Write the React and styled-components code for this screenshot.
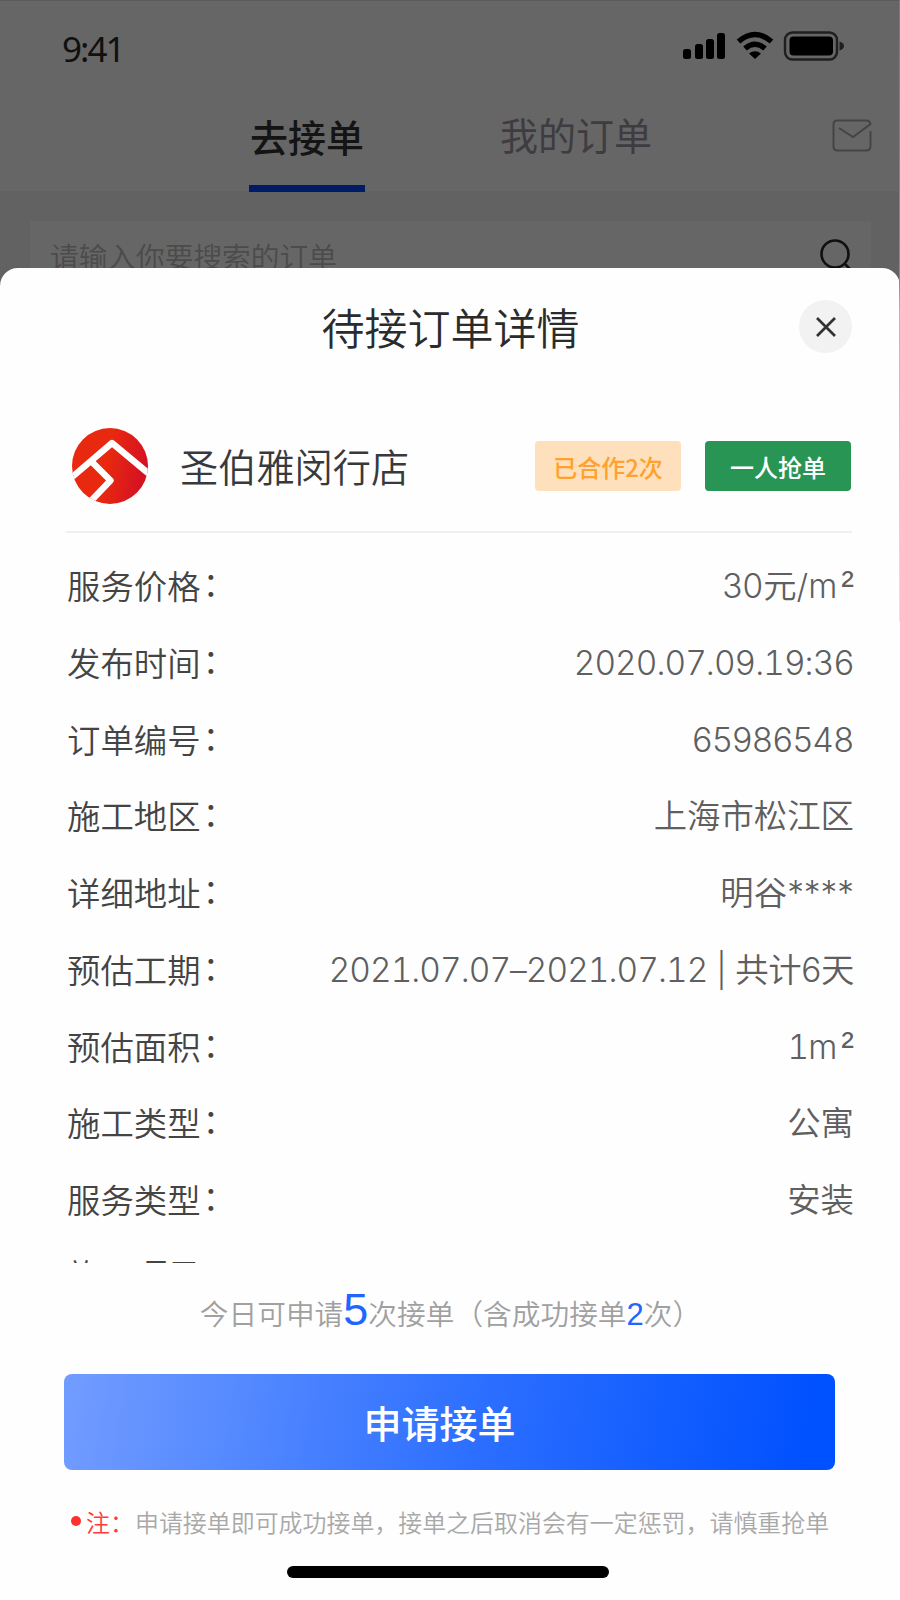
import React from "react";
import styled, { createGlobalStyle } from "styled-components";

const GlobalStyle = createGlobalStyle`
  * {
    box-sizing: border-box;
  }
  body {
    margin: 0;
    background: #fff;
    font-family: "Noto Sans CJK SC", sans-serif;
    font-weight: 350;
  }
`;

const Screen = styled.div`
  display: flex;
  flex-direction: column;
  position: relative;
  width: 900px;
  height: 1600px;
  overflow: hidden;
  background: linear-gradient(#626262 400px, #fefefe 400px);
`;

const Edge = styled.div`
  position: absolute;
  z-index: 1;
  top: 0;
  right: 0;
  width: 1px;
  height: 622px;
  background: linear-gradient(#b3606d, #c2707e 45%, #dfa5ad 50%, #f3dfe2);
`;

const Page = styled.div`
  flex: none;
  height: 268px;
  overflow: hidden;
`;

const TopArea = styled.div`
  height: 191px;
  background: #666;
  border-top: 1px solid #5a5a5a;
`;

const StatusBar = styled.div`
  display: flex;
  align-items: center;
  justify-content: space-between;
  height: 96px;
  padding: 0 55px 4px 62px;
`;

const Time = styled.span`
  padding-top: 2px;
  font-family: "Noto Sans", sans-serif;
  font-weight: 400;
  font-size: 35px;
  letter-spacing: -2px;
  color: #101010;
`;

const Tabs = styled.div`
  display: flex;
  height: 94px;
  padding: 0 28px 0 249px;
`;

const Tab = styled.div`
  width: ${(props) => (props.$active ? "116px" : "154px")};
  height: 95px;
  margin-right: ${(props) => (props.$active ? "134px" : "auto")};
  border-bottom: ${(props) => (props.$active ? "7px solid #001c66" : "none")};
  font-size: 38px;
  line-height: ${(props) => (props.$active ? "78px" : "73px")};
  font-weight: ${(props) => (props.$active ? 500 : 400)};
  text-align: center;
  white-space: nowrap;
  color: ${(props) => (props.$active ? "#141414" : "#3e3c40")};
`;

const MailIcon = styled.svg`
  margin-top: 22px;
`;

const SearchBox = styled.div`
  display: flex;
  justify-content: space-between;
  width: 841px;
  height: 80px;
  margin: 30px 0 0 30px;
  padding: 0 18px 0 20px;
  background: #666;
  font-size: 28.7px;
  line-height: 69px;
  color: #4b4b4b;
`;

const SearchIcon = styled.svg`
  margin-top: 17px;
`;

const Sheet = styled.div`
  flex: 1;
  display: flex;
  flex-direction: column;
  padding: 0 47px 0 66px;
  border-radius: 18px 18px 0 0;
  background: #fefefe;
`;

const SheetHeader = styled.div`
  display: grid;
  grid-template-columns: 54px 1fr 54px;
  align-items: center;
  height: 117px;
  margin-left: -18px;
`;

const Title = styled.h1`
  grid-column: 2;
  margin: 0;
  padding-bottom: 2px;
  font-size: 43px;
  line-height: 60px;
  font-weight: 350;
  text-align: center;
  color: #2b2b2b;
`;

const Close = styled.button`
  display: flex;
  align-items: center;
  justify-content: center;
  width: 53px;
  height: 53px;
  padding: 0;
  border: 0;
  border-radius: 50%;
  background: #f2f2f2;
`;

const Shop = styled.div`
  display: flex;
  align-items: center;
  width: 786px;
  height: 148px;
  padding: 16px 1px 0 6px;
  border-bottom: 2px solid #f0f0f0;
`;

const ShopName = styled.div`
  flex: 1;
  margin-left: 32px;
  font-size: 38.2px;
  line-height: 50px;
  color: #38393c;
`;

const Badge = styled.div`
  width: 146px;
  height: 50px;
  margin-left: 24px;
  border-radius: 4px;
  background: ${(props) => props.$bg};
  font-size: 24px;
  line-height: 52px;
  font-weight: 500;
  text-align: center;
  color: ${(props) => props.$color};
`;

const Rows = styled.div`
  width: 788px;
  height: 730px;
  padding-top: 15px;
  overflow: hidden;
`;

const Row = styled.div`
  display: flex;
  justify-content: space-between;
  height: 76.75px;
  line-height: 74px;

  &:last-child {
    line-height: 69px;
  }
`;

const Label = styled.span`
  padding-left: 1px;
  font-size: 33.4px;
  color: #444;
`;

const Colon = styled.span`
  display: inline-block;
  transform: translate(2px, -3px);
`;

const Value = styled.span`
  padding-top: 1px;
  font-family: Inter, "Noto Sans CJK SC", sans-serif;
  font-size: 33.4px;
  white-space: pre;
  color: #5f5f5f;
`;

const DateText = styled.span`
  font-feature-settings: "tnum", "calt" 0;
  letter-spacing: -0.93px;
`;

const Total = styled.span`
  letter-spacing: -0.4px;
`;

const Square = styled.span`
  margin-left: 4px;
  font-family: "Liberation Sans", sans-serif;
  font-size: 38px;
  line-height: 1;
`;

const Quota = styled.div`
  display: flex;
  align-items: baseline;
  justify-content: center;
  height: 111px;
  margin-right: 18px;
  font-size: 28.7px;
  line-height: 94px;
  color: #a0a0a0;
`;

const Count = styled.span`
  font-family: "Liberation Sans", sans-serif;
  font-size: ${(props) => props.$size}px;
  font-weight: 400;
  color: #2264ff;
`;

const Submit = styled.button`
  width: 771px;
  height: 96px;
  margin-left: -2px;
  padding: 0 20px 0 0;
  border: 0;
  border-radius: 8px;
  background: linear-gradient(100deg, #709bff 2%, #2e70ff 52%, #0051ff 96%);
  font-family: inherit;
  font-size: 38px;
  line-height: 96px;
  font-weight: 500;
  color: #fff;
`;

const Notice = styled.div`
  display: flex;
  align-items: center;
  height: 94px;
  padding: 8px 0 0 5px;
  font-size: 23.95px;
  white-space: nowrap;
  color: #a8a8a8;
`;

const Dot = styled.span`
  width: 10px;
  height: 10px;
  margin-right: 5px;
  border-radius: 50%;
  background: #ff3030;
`;

const Warn = styled.span`
  width: 49px;
  color: #ff3b3b;
`;

const HomeBar = styled.div`
  width: 322px;
  height: 12px;
  margin: 2px 0 0 221px;
  border-radius: 6px;
  background: #000;
`;

const rows = [
  { label: "服务价格", value: <>30元/m<Square>²</Square></> },
  { label: "发布时间", value: <DateText>2020.07.09.19:36</DateText> },
  { label: "订单编号", value: "65986548" },
  { label: "施工地区", value: "上海市松江区" },
  { label: "详细地址", value: "明谷****" },
  {
    label: "预估工期",
    value: (
      <>
        <DateText>2021.07.07–2021.07.12</DateText>
        <Total> | 共计6天</Total>
      </>
    ),
  },
  { label: "预估面积", value: <><DateText>1</DateText>m<Square>²</Square></> },
  { label: "施工类型", value: "公寓" },
  { label: "服务类型", value: "安装" },
  { label: "施工项目", value: "" },
];

const StatusIcons = () => (
  <svg width="164" height="32" viewBox="0 0 164 32">
    <rect x="2" y="18" width="8" height="10" rx="2.5" />
    <rect x="14" y="13" width="8" height="15" rx="2.5" />
    <rect x="25" y="8" width="8" height="20" rx="2.5" />
    <rect x="36" y="2" width="8" height="26" rx="2.5" />
    <g fill="none" stroke="#000" strokeWidth="5.500">
      <path d="M57.500 10.500 Q74 -3.500 90.500 10.500" />
      <path d="M64 17.500 Q74 9 84 17.500" />
    </g>
    <path d="M68 22.500 Q74 18 80 22.500 L74 28Z" />
    <rect x="104" y="1.500" width="52" height="27" rx="7.500" fill="none" stroke="#1f1f1f" strokeWidth="2.400" />
    <rect x="108.500" y="5.500" width="43.500" height="19" rx="4" />
    <path d="M158.500 10.500 Q163 12 163 15 Q163 18 158.500 19.500Z" fill="#1f1f1f" />
  </svg>
);

const Logo = () => (
  <svg width="76" height="76" viewBox="0 0 76 76">
    <defs>
      <linearGradient id="logo" x1="0" y1="0.4" x2="1" y2="0.6">
        <stop offset="0.45" stopColor="#e8290f" />
        <stop offset="1" stopColor="#d30f24" />
      </linearGradient>
      <clipPath id="disc">
        <circle cx="38" cy="38" r="38" />
      </clipPath>
    </defs>
    <g clipPath="url(#disc)">
      <rect width="76" height="76" fill="url(#logo)" />
      <g fill="none" stroke="#fff" strokeWidth="6.400" strokeLinejoin="round">
        <path d="M-4 52.500 L40 15 L82 50" />
        <path d="M20 34 L38.500 52.500 L17 75" />
      </g>
    </g>
  </svg>
);

const App = () => {
  return (
    <Screen>
      <GlobalStyle />
      <Edge />
      <Page>
        <TopArea>
          <StatusBar>
            <Time>9:41</Time>
            <StatusIcons />
          </StatusBar>
          <Tabs>
            <Tab $active>去接单</Tab>
            <Tab>我的订单</Tab>
            <MailIcon width="40" height="34" viewBox="0 0 40 34" fill="none" stroke="#444" strokeWidth="2">
              <path d="M38.500 12 V27 Q38.500 31.500 34 31.500 H5.500 Q1.500 31.500 1.500 27.500 V5.500 Q1.500 1.500 5.500 1.500 H34 Q38 1.500 38.500 5 L21 18 L7 9" />
            </MailIcon>
          </Tabs>
        </TopArea>
        <SearchBox>
          请输入你要搜索的订单
          <SearchIcon width="34" height="36" viewBox="0 0 34 36" fill="none" stroke="#101010" strokeWidth="2.600">
            <circle cx="16" cy="16" r="13.500" />
            <path d="M25 25 L32 32" />
          </SearchIcon>
        </SearchBox>
      </Page>
      <Sheet>
        <SheetHeader>
          <Title>待接订单详情</Title>
          <Close>
            <svg width="22" height="22" viewBox="0 0 22 22" stroke="#333" strokeWidth="2.700">
              <path d="M2 2 L20 20 M20 2 L2 20" />
            </svg>
          </Close>
        </SheetHeader>
        <Shop>
          <Logo />
          <ShopName>圣伯雅闵行店</ShopName>
          <Badge $bg="#ffe0bc" $color="#ffa12e">已合作2次</Badge>
          <Badge $bg="#289555" $color="#fff">一人抢单</Badge>
        </Shop>
        <Rows>
          {rows.map(({ label, value }) => (
            <Row key={label}>
              <Label>
                {label}
                <Colon>：</Colon>
              </Label>
              <Value>{value}</Value>
            </Row>
          ))}
        </Rows>
        <Quota>
          今日可申请<Count $size={45}>5</Count>次接单（含成功接单<Count $size={31}>2</Count>次）
        </Quota>
        <Submit>申请接单</Submit>
        <Notice>
          <Dot />
          <Warn>注：</Warn>
          申请接单即可成功接单，接单之后取消会有一定惩罚，请慎重抢单
        </Notice>
        <HomeBar />
      </Sheet>
    </Screen>
  );
};

export default App;
